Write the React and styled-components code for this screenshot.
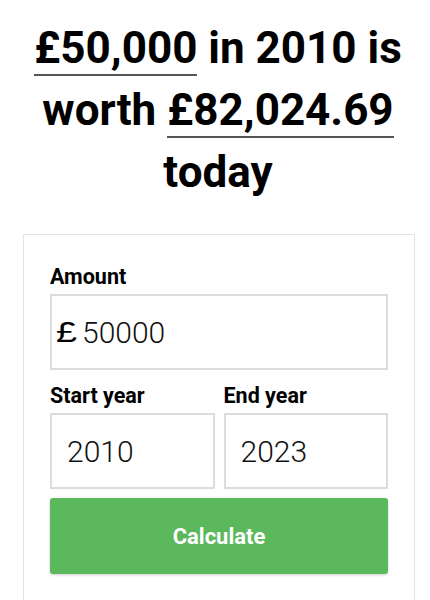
import styled, { createGlobalStyle } from 'styled-components';

const GlobalStyle = createGlobalStyle`
    html, body {
        margin: 0;
        padding: 0;
        background: #fff;
        font-family: Roboto, "Liberation Sans", sans-serif;
        color: #000;
    }
`

const App = () => {
    return (
        <>
            <GlobalStyle />
            <Headline>
                <Figure>£50,000</Figure> in 2010 is worth <Figure>£82,024.69</Figure> today
            </Headline>
            <Card>
                <Label>Amount</Label>
                <InputBox>
                    <Prefix>£</Prefix>
                    <Field defaultValue="50000" $pad="4px" />
                </InputBox>
                <Row>
                    <Col>
                        <Label>Start year</Label>
                        <InputBox>
                            <Field defaultValue="2010" $pad="15px" />
                        </InputBox>
                    </Col>
                    <Col>
                        <Label>End year</Label>
                        <InputBox>
                            <Field defaultValue="2023" $pad="15px" />
                        </InputBox>
                    </Col>
                </Row>
                <Button>Calculate</Button>
            </Card>
        </>
    );
}

export default App;

const Headline = styled.h1`
    margin: 17px 17px 31px 23px;
    font-size: 44px;
    line-height: 62px;
    font-weight: 700;
    text-align: center;
`

const Figure = styled.span`
    border-bottom: 2px solid #555;
`

const Card = styled.div`
    margin: 0 15px 0 23px;
    border: 1px solid #e3e3e3;
    padding: 30px 26px 40px;
`

const Label = styled.div`
    font-size: 21.5px;
    line-height: 24px;
    font-weight: 700;
    margin-bottom: 5px;
`

const InputBox = styled.div`
    display: flex;
    align-items: center;
    height: 76px;
    box-sizing: border-box;
    border: 2px solid #dcdcdc;
    background: #fff;
`

const Prefix = styled.span`
    display: inline-block;
    margin-left: 4px;
    font-family: "Liberation Sans", Arial, sans-serif;
    font-size: 29px;
    font-weight: 400;
    color: #000;
    transform: scaleX(1.3);
    transform-origin: left center;
    width: 22px;
`

const Field = styled.input`
    flex: 1;
    min-width: 0;
    border: none;
    outline: none;
    background: transparent;
    font-family: Roboto, "Liberation Sans", sans-serif;
    font-size: 30px;
    font-weight: 300;
    color: #111;
    padding: 0 0 0 ${p => p.$pad};
`

const Row = styled.div`
    display: flex;
    gap: 9px;
    margin-top: 14px;
`

const Col = styled.div`
    flex: 1;
    min-width: 0;
`

const Button = styled.button`
    display: block;
    width: 100%;
    height: 76px;
    margin-top: 9px;
    border: none;
    border-radius: 3px;
    background: #5cb85c;
    box-shadow: 0 1px 3px rgba(0, 0, 0, 0.2);
    color: #fff;
    font-family: Roboto, "Liberation Sans", sans-serif;
    font-size: 22px;
    font-weight: 700;
`
